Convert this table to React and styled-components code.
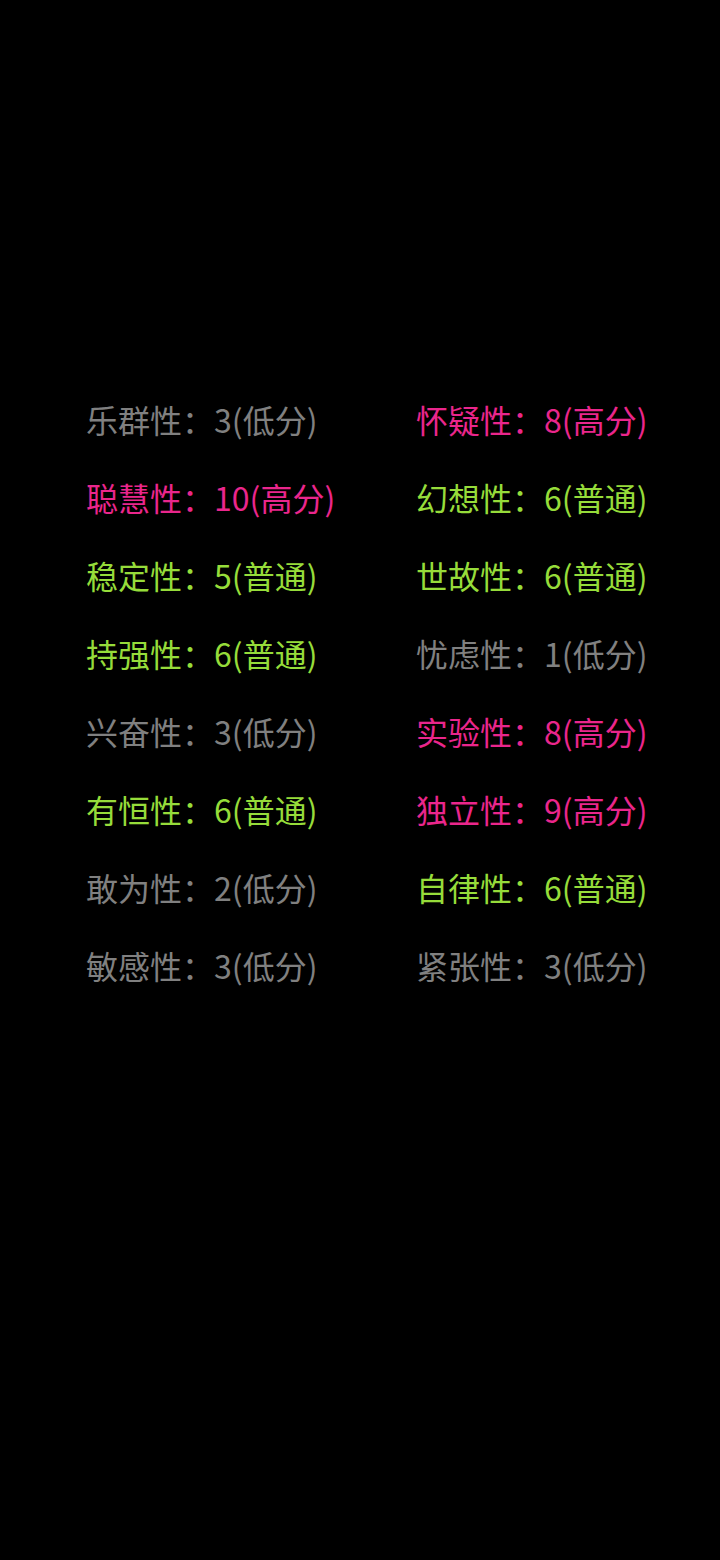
import React from 'react';
import styled, { createGlobalStyle } from 'styled-components';

const GlobalStyle = createGlobalStyle`
  html, body {
    margin: 0;
    padding: 0;
    background: #000;
  }
  body {
    font-family: "Noto Sans CJK SC", "Noto Sans", sans-serif;
  }
`;

const Page = styled.div`
  width: 720px;
  height: 1560px;
  background: #000;
  box-sizing: border-box;
  padding: 380px 0 0 86px;
`;

const Grid = styled.div`
  display: grid;
  grid-template-columns: 330px 330px;
  grid-auto-rows: 78px;
`;

const colors = {
  low: '#808080',
  mid: '#96dc3a',
  high: '#ea268c',
};

const Item = styled.div`
  display: flex;
  align-items: center;
  font-size: 32px;
  font-weight: 400;
  white-space: nowrap;
  color: ${(props) => colors[props.level]};
`;

const levelText = { low: '低分', mid: '普通', high: '高分' };

const items = [
  ['乐群性', 3, 'low'],
  ['怀疑性', 8, 'high'],
  ['聪慧性', 10, 'high'],
  ['幻想性', 6, 'mid'],
  ['稳定性', 5, 'mid'],
  ['世故性', 6, 'mid'],
  ['持强性', 6, 'mid'],
  ['忧虑性', 1, 'low'],
  ['兴奋性', 3, 'low'],
  ['实验性', 8, 'high'],
  ['有恒性', 6, 'mid'],
  ['独立性', 9, 'high'],
  ['敢为性', 2, 'low'],
  ['自律性', 6, 'mid'],
  ['敏感性', 3, 'low'],
  ['紧张性', 3, 'low'],
];

export default function App() {
  return (
    <Page>
      <GlobalStyle />
      <Grid>
        {items.map(([name, score, level]) => (
          <Item key={name} level={level}>
            {name}：{score}({levelText[level]})
          </Item>
        ))}
      </Grid>
    </Page>
  );
}
